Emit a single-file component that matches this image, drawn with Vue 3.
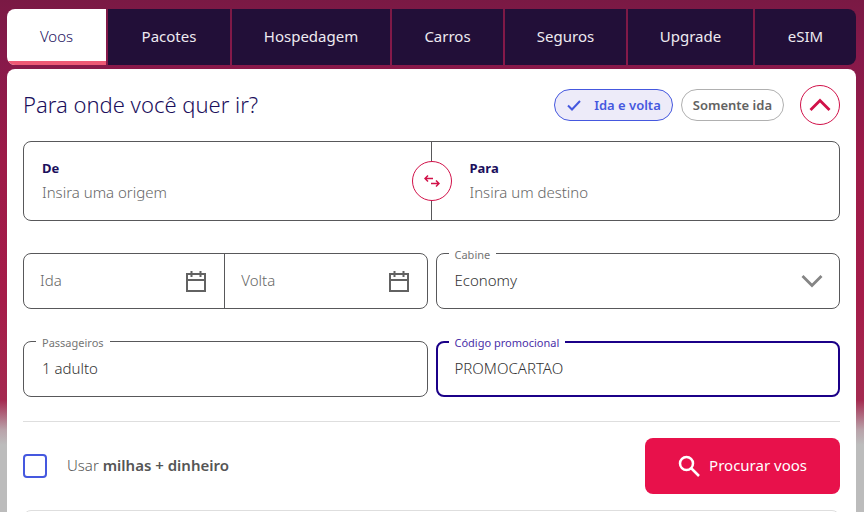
<script setup>
import { ref } from 'vue'

const tabs = ['Voos', 'Pacotes', 'Hospedagem', 'Carros', 'Seguros', 'Upgrade', 'eSIM']
const activeTab = ref('Voos')
const roundTrip = ref(true)
const origin = ref('')
const destination = ref('')
const departDate = ref('')
const returnDate = ref('')
const cabin = ref('Economy')
const passengers = ref('1 adulto')
const promo = ref('PROMOCARTAO')
const useMiles = ref(false)

function swapPlaces() {
  const previous = origin.value
  origin.value = destination.value
  destination.value = previous
}
</script>

<template>
  <main class="page">
    <nav class="tabs">
      <button
        v-for="tab in tabs"
        :key="tab"
        type="button"
        class="tab"
        :class="{ active: tab === activeTab }"
        @click="activeTab = tab"
      >{{ tab }}</button>
    </nav>

    <form class="card" @submit.prevent>
      <header class="head">
        <h1 class="title">Para onde você quer ir?</h1>
        <div class="chips">
          <button type="button" class="chip" :class="{ selected: roundTrip }" :aria-pressed="roundTrip" @click="roundTrip = true">
            <svg v-if="roundTrip" class="check" viewBox="0 0 16 16" aria-hidden="true"><path d="M2 8.5 6 12.5 14 4" /></svg>
            Ida e volta
          </button>
          <button type="button" class="chip" :class="{ selected: !roundTrip }" :aria-pressed="!roundTrip" @click="roundTrip = false">Somente ida</button>
        </div>
        <button type="button" class="round" aria-label="Recolher">
          <svg class="up" viewBox="0 0 24 24" stroke-width="2.8" aria-hidden="true"><path d="M2.5 17 12 7.5 21.5 17" /></svg>
        </button>
      </header>

      <div class="places">
        <div class="place">
          <label for="origin">De</label>
          <input id="origin" v-model="origin" type="text" placeholder="Insira uma origem">
        </div>
        <div class="place">
          <label for="destination">Para</label>
          <input id="destination" v-model="destination" type="text" placeholder="Insira um destino">
        </div>
        <button type="button" class="round swap" aria-label="Inverter" @click="swapPlaces">
          <svg viewBox="0 0 16 16" stroke-width="1.5" aria-hidden="true"><path d="M9 5.5H1M4 2.5l-3 3 3 3M7 10.5h8M12 7.5l3 3-3 3" /></svg>
        </button>
      </div>

      <div class="grid">
        <div class="dates">
          <div class="date">
            <input v-model="departDate" type="text" placeholder="Ida" aria-label="Ida">
            <svg class="calendar" viewBox="0 0 20 22" aria-hidden="true"><path d="M1 4h18v17H1zM1 10h18M5.500 1v6M14.500 1v6" /></svg>
          </div>
          <div class="date">
            <input v-model="returnDate" type="text" placeholder="Volta" aria-label="Volta">
            <svg class="calendar" viewBox="0 0 20 22" aria-hidden="true"><path d="M1 4h18v17H1zM1 10h18M5.500 1v6M14.500 1v6" /></svg>
          </div>
        </div>

        <div class="field">
          <label for="cabin">Cabine</label>
          <select id="cabin" v-model="cabin">
            <option>Economy</option>
            <option>Premium Economy</option>
            <option>Premium Business</option>
          </select>
          <svg class="down" viewBox="0 0 24 24" stroke-width="2.8" aria-hidden="true"><path d="M2.5 7 12 16.500l9.500-9.500" /></svg>
        </div>

        <div class="field">
          <label for="passengers">Passageiros</label>
          <input id="passengers" v-model="passengers" type="text">
        </div>

        <div class="field focused">
          <label for="promo">Código promocional</label>
          <input id="promo" v-model="promo" type="text">
        </div>
      </div>

      <footer class="foot">
        <label class="miles">
          <input v-model="useMiles" type="checkbox">
          <span>Usar <strong>milhas + dinheiro</strong></span>
        </label>
        <button type="submit" class="search">
          <svg viewBox="0 0 24 24" stroke-width="2.5" aria-hidden="true"><circle cx="9.500" cy="9.500" r="6.500" /><path d="m14 14 8 8" /></svg>
          <span>Procurar voos</span>
        </button>
      </footer>
      <section class="extra"></section>
    </form>
  </main>
</template>

<style>
body {
  margin: 0;
}
</style>

<style scoped>
* {
  box-sizing: border-box;
}

.page {
  height: 100vh;
  overflow: hidden;
  padding: 9px 8px 0 7px;
  font-family: "Noto Sans", sans-serif;
  font-size: 15px;
  line-height: 24px;
  color: #4a4a4a;
  background: linear-gradient(#7a1944 0, #85194a 50px, #9d1b48 160px, #a51c49 300px, #a42a50 400px, #b9a3aa 430px, #bcbcbc 445px);
}

button,
input,
select {
  margin: 0;
  font: inherit;
}

button {
  cursor: pointer;
}

svg {
  display: block;
  flex: none;
  fill: none;
  stroke: currentColor;
}

.tabs {
  display: grid;
  grid-template-columns: 99fr 122fr 158fr 111fr 121fr 125fr 101fr;
  gap: 2px;
  margin-bottom: 4px;
  border-radius: 8px;
  overflow: hidden;
}

.tab {
  height: 56px;
  padding: 0 0 2px;
  border: 0;
  background: #220f38;
  color: #eeeaf0;
}

.tab.active {
  padding: 2px 0 0;
  border-bottom: 4px solid #ee5975;
  background: #fff;
  font-weight: 300;
  color: #1b0f5c;
}

.card {
  padding: 16px 16px 0;
  border-radius: 8px 8px 0 0;
  background: #fff;
}

.head {
  display: flex;
  align-items: center;
  gap: 16px;
  margin-bottom: 16px;
}

.title {
  flex: 1;
  margin: 0;
  padding-bottom: 2px;
  font-size: 22px;
  line-height: 32px;
  font-weight: 300;
  color: #1b0f5c;
}

.chips {
  display: flex;
  gap: 8px;
}

.chip {
  display: flex;
  align-items: center;
  gap: 12px;
  height: 32px;
  padding: 0 11px 1px;
  border: 1px solid #b0b0b0;
  border-radius: 16px;
  background: #fff;
  font-size: 13px;
  font-weight: 600;
  color: #626262;
}

.chip.selected {
  border-color: #4558df;
  background: #edebf9;
  color: #4558df;
}

.check {
  width: 16px;
  height: 16px;
  stroke-width: 2;
}

.round {
  display: flex;
  align-items: center;
  justify-content: center;
  width: 40px;
  height: 40px;
  padding: 0;
  border: 1px solid #d11149;
  border-radius: 50%;
  background: #fff;
  color: #d11149;
}

.up,
.down {
  width: 24px;
  height: 24px;
}

.places {
  position: relative;
  display: grid;
  grid-template-columns: 1fr 1fr;
  margin-bottom: 32px;
  border: 1px solid #58585a;
  border-radius: 8px;
}

.place {
  display: flex;
  flex-direction: column;
  height: 78px;
  padding: 14px 18px;
}

.place:first-child {
  border-right: 1px solid #58585a;
}

.place + .place {
  padding-left: 38px;
}

.place label {
  font-size: 13px;
  font-weight: 700;
  color: #1b0f5c;
}

input[type="text"],
select {
  width: 100%;
  min-width: 0;
  padding: 0;
  border: 0;
  outline: 0;
  background: transparent;
  font-weight: 300;
  color: #333;
  appearance: none;
}

input::placeholder {
  color: #666;
  opacity: 1;
}

.swap {
  position: absolute;
  top: 50%;
  left: 50%;
  transform: translate(-50%, -50%);
}

.swap svg {
  width: 16px;
  height: 16px;
}

.grid {
  display: grid;
  grid-template-columns: 1fr 1fr;
  gap: 32px 8px;
  margin-bottom: 24px;
}

.dates {
  display: grid;
  grid-template-columns: 1fr 1fr;
  border: 1px solid #58585a;
  border-radius: 8px;
}

.date {
  display: flex;
  align-items: center;
  padding: 0 18px 0 16px;
  color: #626262;
}

.date:first-child {
  border-right: 1px solid #58585a;
}

.date input[type="text"],
.field input[type="text"],
.field select {
  padding-bottom: 2px;
}

.calendar {
  width: 20px;
  height: 22px;
  stroke-width: 2;
}

.field {
  position: relative;
  display: flex;
  align-items: center;
  height: 56px;
  padding: 0 15px 0 18px;
  border: 1px solid #58585a;
  border-radius: 8px;
}

.field label {
  position: absolute;
  top: -7px;
  left: 12px;
  padding: 0 6px;
  background: #fff;
  font-size: 11px;
  line-height: 16px;
  color: #757575;
}

.field.focused {
  padding: 0 14px 0 17px;
  border: 2px solid #1b0088;
}

.focused label {
  top: -8px;
  left: 11px;
  color: #4a2fa8;
}

.down {
  color: #858585;
}

.foot {
  display: flex;
  align-items: center;
  justify-content: space-between;
  padding: 16px 0;
  border-top: 1px solid #dedede;
}

.miles {
  display: flex;
  align-items: center;
  gap: 20px;
  font-weight: 300;
  color: #555;
}

.miles span,
.search span {
  padding-bottom: 2px;
}

.miles strong {
  font-weight: 600;
}

.miles input {
  width: 24px;
  height: 24px;
  margin: 0;
  border: 2px solid #4558df;
  border-radius: 4px;
  background: #fff;
  appearance: none;
}

.miles input:checked {
  background: #4558df;
}

.search {
  display: flex;
  align-items: center;
  justify-content: center;
  gap: 8px;
  height: 56px;
  padding: 0 33px 0 32px;
  border: 0;
  border-radius: 8px;
  background: #e8114b;
  color: #fff;
}

.search svg {
  width: 24px;
  height: 24px;
}

.extra {
  height: 56px;
  border: 1px solid #dedede;
  border-radius: 8px;
}
</style>
